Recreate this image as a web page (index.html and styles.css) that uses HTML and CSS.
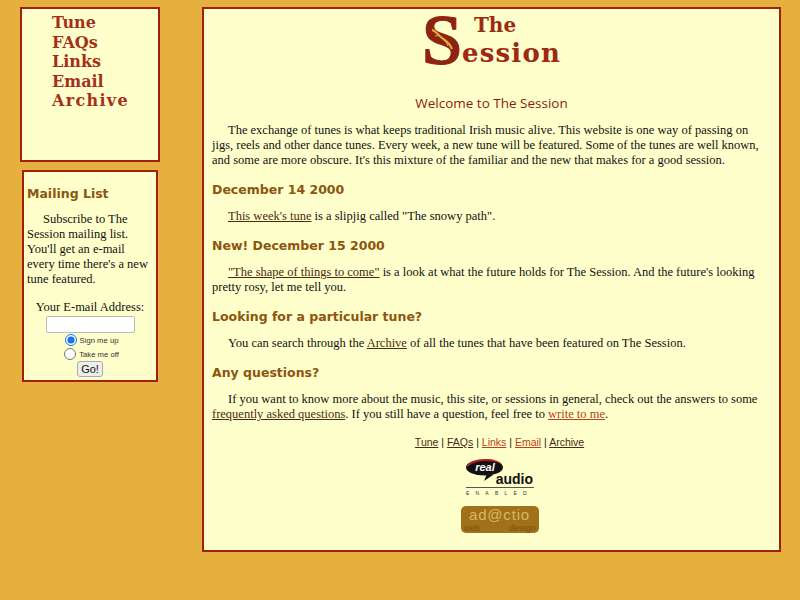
FILE: index.html
```html
<!DOCTYPE html>
<html lang="en">
<head>
    <meta charset="UTF-8">
    <title>The Session</title>
    <link rel="stylesheet" href="styles.css">
</head>
<body>
    <div class="sidebar">
        <div class="nav">
            <a href="#">Tune</a>
            <a href="#">FAQs</a>
            <a href="#">Links</a>
            <a href="#">Email</a>
            <a href="#" class="wide">Archive</a>
        </div>
        <div class="mailing">
            <h2>Mailing List</h2>
            <p>Subscribe to The Session mailing list. You'll get an e-mail every time there's a new tune featured.</p>
            <form class="signup">
                <label for="email">Your E-mail Address:</label>
                <input type="text" id="email">
                <label class="choice"><input type="radio" name="action" checked>Sign me up</label>
                <label class="choice"><input type="radio" name="action">Take me off</label>
                <button type="button">Go!</button>
            </form>
        </div>
    </div>

    <div class="main">
        <div class="logo">
            <div class="logo-cap">S
                <svg class="logo-knot" width="26" height="26" viewBox="0 0 26 26">
                    <path d="M3 3c4 1 6 5 10 8s8 5 10 11" fill="none" stroke="#e6b03e" stroke-width="2"/>
                    <path d="M6 9c3-1 5 0 8 3s4 4 5 7" fill="none" stroke="#e6b03e" stroke-width="1"/>
                </svg>
            </div>
            <div class="logo-words">
                <span class="logo-the">The</span>
                <span class="logo-rest">ession</span>
            </div>
        </div>
        <h1>Welcome to The Session</h1>
        <p>The exchange of tunes is what keeps traditional Irish music alive. This website is one way of passing on jigs, reels and other dance tunes. Every week, a new tune will be featured. Some of the tunes are well known, and some are more obscure. It's this mixture of the familiar and the new that makes for a good session.</p>

        <h2>December 14 2000</h2>
        <p><a href="#">This week's tune</a> is a slipjig called "The snowy path".</p>

        <h2>New! December 15 2000</h2>
        <p><a href="#">"The shape of things to come"</a> is a look at what the future holds for The Session. And the future's looking pretty rosy, let me tell you.</p>

        <h2>Looking for a particular tune?</h2>
        <p>You can search through the <a href="#">Archive</a> of all the tunes that have been featured on The Session.</p>

        <h2>Any questions?</h2>
        <p>If you want to know more about the music, this site, or sessions in general, check out the answers to some <a href="#">frequently asked questions</a>. If you still have a question, feel free to <a href="#" class="visited">write to me</a>.</p>

        <div class="footer-links">
            <a href="#">Tune</a> | <a href="#">FAQs</a> | <a href="#" class="visited">Links</a> | <a href="#" class="visited">Email</a> | <a href="#">Archive</a>
        </div>

        <div class="badges">
            <svg class="realaudio" width="70" height="38" viewBox="0 0 70 38">
                <ellipse cx="19.5" cy="8.5" rx="18.5" ry="8" fill="#111"/>
                <path d="M1 9C2 3 11 0 21 0c7 0 13 2 16 5-5-2-11-3-17-3C12 2 5 5 1 9z" fill="#b81c1c"/>
                <path d="M22 15l-3 7 9-6z" fill="#111"/>
                <text x="20" y="12" class="ra-real">real</text>
                <text x="68" y="25" class="ra-audio">audio</text>
                <rect x="1" y="28" width="68" height="1" fill="#555"/>
                <text x="1" y="36" class="ra-enabled">ENABLED</text>
            </svg>
            <div class="adactio">
                <span class="ad-top">ad@ctio</span>
                <span class="ad-bottom"><span>web</span><span>design</span></span>
            </div>
        </div>
    </div>
</body>
</html>
```

FILE: styles.css
```css
body {
    margin: 0;
    height: 600px;
    overflow: hidden;
    background-color: #e6b03e;
    font-family: "Liberation Serif", serif;
    font-size: 12.5px;
    line-height: 15px;
    color: #111;
    display: flex;
    align-items: flex-start;
    gap: 42px;
    padding: 7px 19px 0 20px;
    box-sizing: border-box;
}
a {
    color: #4a2a10;
}
a.visited {
    color: #b8401c;
}
.sidebar {
    width: 140px;
    flex-shrink: 0;
    display: flex;
    flex-direction: column;
    gap: 8px;
}
.nav {
    height: 155px;
    box-sizing: border-box;
    background-color: #ffffcc;
    border: 2px solid #a02010;
    padding: 4px 0 0 30px;
    display: flex;
    flex-direction: column;
}
.nav a {
    height: 19.5px;
    line-height: 19px;
    font-family: "DejaVu Serif", serif;
    font-size: 16px;
    font-weight: bold;
    color: #a5301a;
    text-decoration: none;
}
.nav a.wide {
    letter-spacing: 1.3px;
}
.mailing {
    margin: 0 2px;
    height: 212px;
    box-sizing: border-box;
    background-color: #ffffcc;
    border: 2px solid #a02010;
    padding: 0 3px;
}
.mailing h2 {
    margin: 14px 0 10px;
}
.mailing p {
    margin: 0 0 13px;
}
.signup {
    display: flex;
    flex-direction: column;
    align-items: center;
    margin: 0;
}
.signup input[type="text"] {
    width: 89px;
    height: 17px;
    box-sizing: border-box;
    border: 1px solid #bbb;
    border-radius: 2px;
    margin: 1px 0 0;
    padding: 0;
    background: #fff;
}
.choice {
    font-family: "Liberation Sans", sans-serif;
    font-size: 7.7px;
    line-height: 13px;
    display: flex;
    align-items: center;
    gap: 3px;
    color: #333;
    height: 14px;
    margin-left: 3px;
}
.choice input {
    width: 12px;
    height: 12px;
    margin: 0;
    accent-color: #1a73e8;
}
.signup button {
    font-family: "Liberation Sans", sans-serif;
    font-size: 11px;
    width: 26px;
    height: 16px;
    padding: 0;
    border: 1px solid #aaa;
    border-radius: 3px;
    background: #eee;
    color: #111;
}
.main {
    width: 579px;
    height: 545px;
    flex-shrink: 0;
    box-sizing: border-box;
    background-color: #ffffcc;
    border: 2px solid #a02010;
    padding: 0 8px;
}
.logo {
    display: flex;
    justify-content: center;
    align-items: flex-end;
    height: 64px;
    padding-top: 3px;
    color: #9c2a14;
    font-family: "DejaVu Serif", serif;
    font-weight: bold;
}
.logo-cap {
    font-family: "Liberation Serif", serif;
    font-size: 72px;
    line-height: 62px;
    color: #8e2410;
    -webkit-text-stroke: 1px #8e2410;
    margin-bottom: 5px;
    position: relative;
}
.logo-knot {
    position: absolute;
    left: 7px;
    top: 18px;
}
.logo-words {
    display: flex;
    flex-direction: column;
}
.logo-the {
    font-size: 20px;
    line-height: 24px;
    padding-left: 12px;
    margin-bottom: 2px;
}
.logo-rest {
    font-size: 26px;
    line-height: 28px;
    letter-spacing: 1.2px;
    padding-bottom: 9px;
}
h1 {
    font-family: "Open Sans", sans-serif;
    font-size: 13.5px;
    font-weight: normal;
    line-height: 18px;
    color: #8c1c10;
    text-align: center;
    margin: 18px 0 11px;
}
.main p {
    margin: 0 0 14px;
    text-indent: 16px;
}
.mailing p {
    text-indent: 16px;
}
h2 {
    font-family: "DejaVu Sans", sans-serif;
    font-size: 12.5px;
    font-weight: bold;
    line-height: 16px;
    color: #8c5510;
    margin: 0 0 11px;
}
.footer-links {
    font-family: "Liberation Sans", sans-serif;
    font-size: 10.5px;
    line-height: 14px;
    text-align: center;
    padding-left: 16px;
    margin-top: -1px;
}
.badges {
    display: flex;
    flex-direction: column;
    align-items: center;
    gap: 9px;
    margin-top: 10px;
    padding-left: 16px;
}
.ra-real {
    font-family: "Liberation Sans", sans-serif;
    font-size: 11px;
    font-weight: bold;
    font-style: italic;
    fill: #fff;
    text-anchor: middle;
}
.ra-audio {
    font-family: "Liberation Sans", sans-serif;
    font-size: 14px;
    font-weight: bold;
    fill: #111;
    text-anchor: end;
}
.ra-enabled {
    font-family: "Liberation Sans", sans-serif;
    font-size: 5px;
    letter-spacing: 6.2px;
    fill: #333;
}
.adactio {
    width: 78px;
    height: 27px;
    border-radius: 5px;
    background-color: #a0701a;
    font-family: "Liberation Sans", sans-serif;
    display: flex;
    flex-direction: column;
    align-items: center;
    overflow: hidden;
}
.ad-top {
    font-size: 15px;
    line-height: 17px;
    letter-spacing: 0.8px;
    color: #d8b860;
}
.ad-bottom {
    font-size: 9px;
    line-height: 10px;
    color: #7a5210;
    display: flex;
    justify-content: space-between;
    width: 72px;
}
```
